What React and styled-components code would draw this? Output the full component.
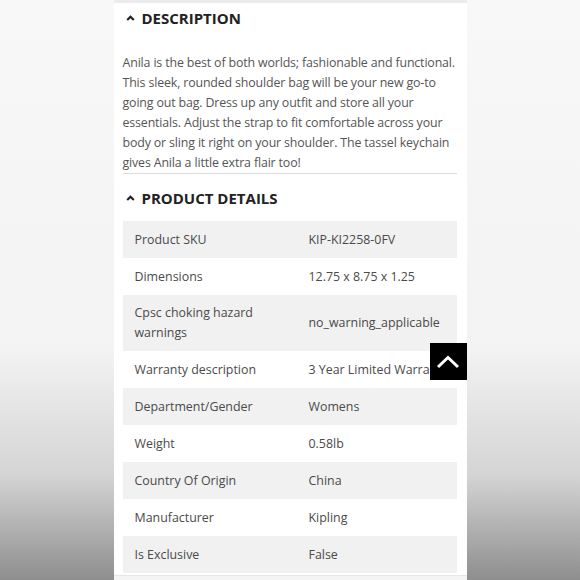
import React from "react";
import styled, { createGlobalStyle } from "styled-components";

const GlobalStyle = createGlobalStyle`
  html, body {
    margin: 0;
    padding: 0;
  }
  body {
    font-family: "Open Sans", "Liberation Sans", sans-serif;
    background: #f6f6f6;
  }
`;

const Page = styled.div`
  width: 580px;
  height: 580px;
  overflow: hidden;
  background: linear-gradient(
    to bottom,
    #f8f8f8 0%,
    #f3f3f3 60%,
    #d4d4d4 82%,
    #8e8e8e 100%
  );
`;

const Panel = styled.div`
  position: relative;
  width: 353px;
  height: 580px;
  margin: 0 auto;
  background: #fff;
  border-top: 3px solid #ececec;
  box-sizing: border-box;
  padding: 0 10px 0 9px;
  overflow: hidden;
`;

const Heading = styled.div`
  display: flex;
  align-items: center;
  gap: 7px;
  height: ${(p) => p.$h}px;
  padding-left: 3px;
  font-size: 15px;
  font-weight: 700;
  color: #222;
`;

const Body = styled.div`
  padding: 21px 0 0;
  font-size: 12.4px;
  line-height: 20px;
  color: #555;
  border-bottom: 1px solid #dcdcdc;
`;

const Line = styled.div`
  white-space: nowrap;
  letter-spacing: -0.15px;
`;

const Table = styled.div`
  display: flex;
  flex-direction: column;
`;

const Row = styled.div`
  display: grid;
  grid-template-columns: 174px 1fr;
  align-items: center;
  min-height: 37px;
  box-sizing: border-box;
  padding: 8px 12px;
  background: ${(p) => (p.$shade ? "#f1f1f1" : "#fff")};
  font-size: 12.4px;
  line-height: 20px;
  color: #4a4a4a;
`;

const Cell = styled.div`
  white-space: ${(p) => (p.$nowrap ? "nowrap" : "normal")};
  padding-right: 20px;
`;

const BottomBar = styled.div`
  position: absolute;
  left: 0;
  right: 0;
  bottom: 0;
  height: 4px;
  background: #f4f4f4;
  border-top: 1px solid #e6e6e6;
`;

const TopButton = styled.button`
  position: absolute;
  right: 0;
  top: 340px;
  width: 37px;
  height: 37px;
  border: none;
  padding: 0;
  background: #000;
  display: flex;
  align-items: center;
  justify-content: center;
  cursor: pointer;
`;

const Caret = () => (
  <svg width="9" height="6" viewBox="0 0 9 6">
    <path d="M1.2 5 L4.5 1.8 L7.8 5" fill="none" stroke="#222" strokeWidth="2.2" />
  </svg>
);

const description = [
  "Anila is the best of both worlds; fashionable and functional.",
  "This sleek, rounded shoulder bag will be your new go-to",
  "going out bag. Dress up any outfit and store all your",
  "essentials. Adjust the strap to fit comfortable across your",
  "body or sling it right on your shoulder. The tassel keychain",
  "gives Anila a little extra flair too!",
];

const rows = [
  ["Product SKU", "KIP-KI2258-0FV"],
  ["Dimensions", "12.75 x 8.75 x 1.25"],
  ["Cpsc choking hazard warnings", "no_warning_applicable"],
  ["Warranty description", "3 Year Limited Warranty"],
  ["Department/Gender", "Womens"],
  ["Weight", "0.58lb"],
  ["Country Of Origin", "China"],
  ["Manufacturer", "Kipling"],
  ["Is Exclusive", "False"],
];

export default function App() {
  return (
    <>
      <GlobalStyle />
      <Page>
        <Panel>
          <Heading $h={29}>
            <Caret />
            DESCRIPTION
          </Heading>
          <Body>
            {description.map((line) => (
              <Line key={line}>{line}</Line>
            ))}
          </Body>
          <Heading $h={47}>
            <Caret />
            PRODUCT DETAILS
          </Heading>
          <Table>
            {rows.map(([label, value], i) => (
              <Row key={label} $shade={i % 2 === 0}>
                <Cell>{label}</Cell>
                <Cell $nowrap>{value}</Cell>
              </Row>
            ))}
          </Table>
          <BottomBar />
          <TopButton aria-label="Back to top">
            <svg width="24" height="14" viewBox="0 0 24 14">
              <path
                d="M2 12 L12 2.5 L22 12"
                fill="none"
                stroke="#fff"
                strokeWidth="3"
              />
            </svg>
          </TopButton>
        </Panel>
      </Page>
    </>
  );
}
